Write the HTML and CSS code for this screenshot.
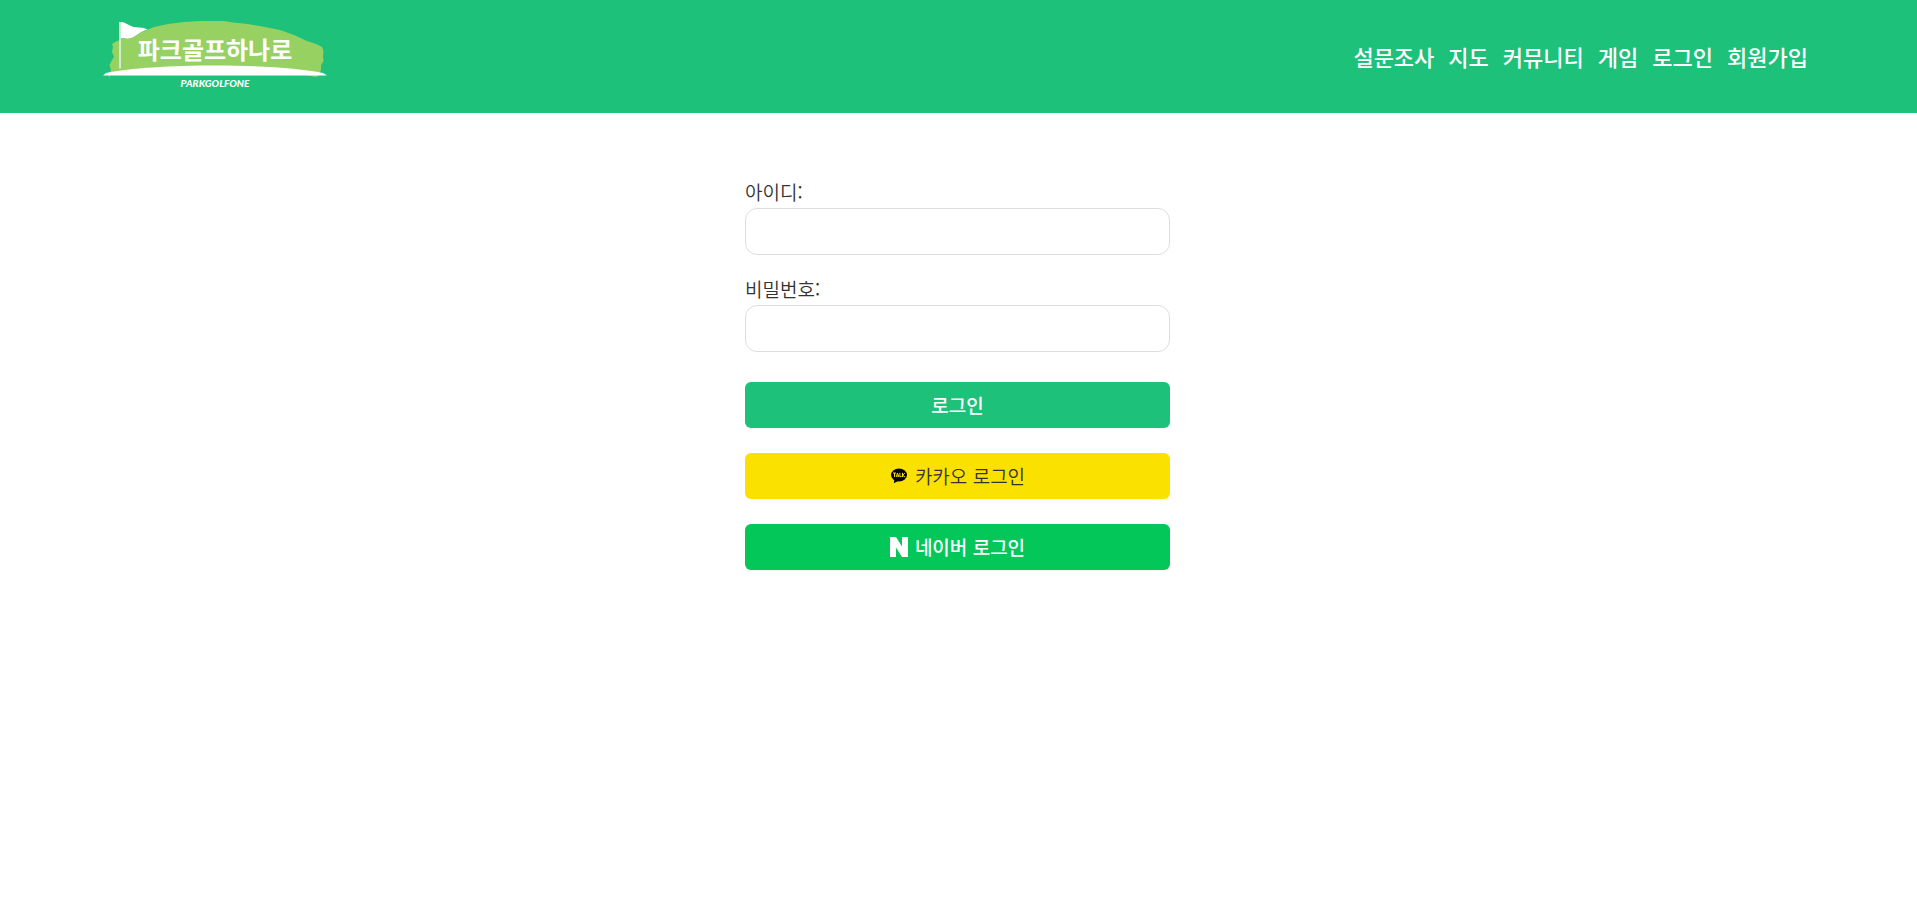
FILE: index.html
```html
<!DOCTYPE html>
<html lang="ko">
<head>
<meta charset="utf-8">
<title>파크골프하나로 - 로그인</title>
<link rel="stylesheet" href="styles.css">
</head>
<body>
<header class="header">
  <a class="logo" href="#" aria-label="파크골프하나로">
    <svg class="logo-art" viewBox="0 0 250 80" width="250" height="80">
      <path fill="#96d162" d="M22 34L26 31.500L32 29L45 26L52 22L64 17L78 14L94 12L110 11L134 11L143 12.500L158 14L175 17L190 20L204 25L217 31L226 34L232 37L233.500 41L233 46L233.500 51L231 55L231 60L228 66L226 67L216 65L150 61L80 61L30 63L20 65L19.500 68L18.500 65L21 60L19.500 55L22 50L24 47L22 42L23 37Z"/>
      <path fill="#fff" d="M13 65.500L16 63C40 58 80 55.500 126 55.500C172 55.500 210 58 233 63L237 65.500Z"/>
      <path fill="#cdeecb" d="M29 12H31V58.500H29Z"/>
      <path fill="#fff" d="M31 12C36 12.500 39 16 44 17C50 18 53 17 57.500 19.500C51 21 47 26 41 28C37 29 34 28 31 28.500Z"/>
      <text class="logo-name" x="125" y="49" text-anchor="middle">파크골프하나로</text>
      <text class="logo-sub" x="125" y="77" text-anchor="middle">PARKGOLFONE</text>
    </svg>
  </a>
  <nav class="nav">
    <a href="#">설문조사</a>
    <a href="#">지도</a>
    <a href="#">커뮤니티</a>
    <a href="#">게임</a>
    <a href="#">로그인</a>
    <a href="#">회원가입</a>
  </nav>
</header>
<main class="main">
  <form class="login">
    <div class="field">
      <label for="user">아이디:</label>
      <input id="user" type="text">
    </div>
    <div class="field">
      <label for="pass">비밀번호:</label>
      <input id="pass" type="password">
    </div>
    <div class="actions">
      <button class="btn btn-main" type="submit">로그인</button>
      <button class="btn btn-kakao" type="button">
        <svg viewBox="0 0 18 18" width="18" height="18" aria-hidden="true">
          <ellipse cx="9" cy="8" rx="8" ry="6.500"/>
          <path d="M4.500 12L3.800 16.300L9 13.500Z"/>
          <path fill="none" stroke="#fbe100" stroke-width="1" d="M3 6H6M4.500 6V10M6.200 10L7.500 6L8.900 10M6.900 9H8.300M9.900 5.800V9.600H11.600M12.500 5.800V10M14.900 6L12.700 8.200L15 10"/>
        </svg>
        <span>카카오 로그인</span>
      </button>
      <button class="btn btn-naver" type="button">
        <svg viewBox="0 0 18 20" width="18" height="20" aria-hidden="true">
          <path fill="#fff" d="M0 0H6L12 9.500V0H18V20H12L6 10.500V20H0Z"/>
        </svg>
        <span>네이버 로그인</span>
      </button>
    </div>
  </form>
</main>
</body>
</html>
```
FILE: styles.css
```css
* { box-sizing: border-box; }
body {
  margin: 0;
  background: #fff;
  color: #333;
  font-family: "Noto Sans CJK KR", sans-serif;
  font-size: 19px;
  line-height: 28px;
}
.header {
  display: flex;
  justify-content: space-between;
  align-items: center;
  padding: 10px 109px 23px 90px;
  background: #1ec17a;
}
.logo { display: block; }
.logo-art { display: block; }
.logo-name { fill: #fff; font-size: 24px; font-weight: 700; }
.logo-sub { fill: #fff; font-family: Lato, sans-serif; font-size: 10px; font-weight: 900; font-style: italic; }
.nav { display: flex; gap: 14px; padding-top: 12px; }
.nav a { color: #fff; font-size: 22px; font-weight: 500; text-decoration: none; }
.main { padding: 64px 26px 64px 24px; }
.login { width: 100%; max-width: 425px; margin: 0 auto; }
.field { display: flex; flex-direction: column; gap: 1px; margin-bottom: 19px; }
.field label { font-weight: 350; line-height: 30px; }
.field input {
  width: 100%;
  height: 47px;
  padding: 0 12px;
  border: 1px solid #ddd;
  border-radius: 12px;
  background: #fff;
  font: inherit;
}
.actions { display: flex; flex-direction: column; gap: 25px; padding-top: 11px; }
.btn {
  display: flex;
  justify-content: center;
  align-items: center;
  gap: 7px;
  width: 100%;
  height: 46px;
  padding: 0;
  border: 0;
  border-radius: 6px;
  color: #fff;
  font: inherit;
  font-weight: 500;
}
.btn-main { background: #1ec17a; }
.btn-kakao { background: #fbe100; color: #333; font-weight: 350; }
.btn-naver { background: #04c75a; }
```
